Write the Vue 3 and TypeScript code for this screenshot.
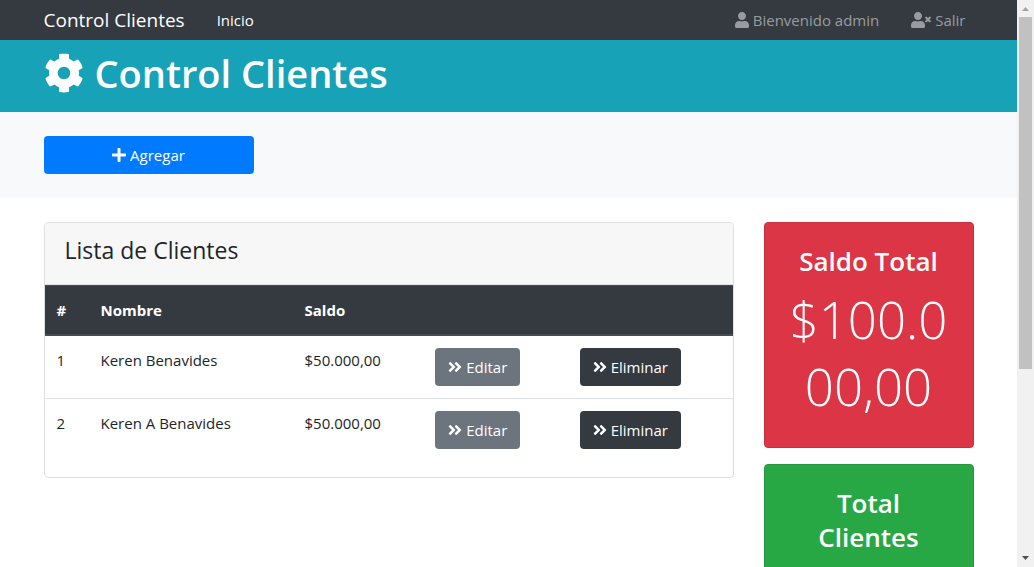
<script setup lang="ts">
interface Cliente {
  id: number
  nombre: string
  saldo: number
}

const clientes: Cliente[] = [
  { id: 1, nombre: 'Keren Benavides', saldo: 50000 },
  { id: 2, nombre: 'Keren A Benavides', saldo: 50000 },
]

const saldoTotal = clientes.reduce((total, c) => total + c.saldo, 0)

function moneda(valor: number): string {
  const [enteros, decimales] = valor.toFixed(2).split('.')
  return '$' + enteros.replace(/\B(?=(\d{3})+$)/g, '.') + ',' + decimales
}

const dobleFlecha =
  'M224.3 273l-136 136c-9.4 9.4-24.6 9.4-33.9 0l-22.6-22.6c-9.4-9.4-9.4-24.6 0-33.9l96.4-96.4-96.4-96.4c-9.4-9.4-9.4-24.6 0-33.9L54.3 103c9.4-9.4 24.6-9.4 33.9 0l136 136c9.5 9.4 9.5 24.6.1 34zm192-34l-136-136c-9.4-9.4-24.6-9.4-33.9 0l-22.6 22.6c-9.4 9.4-9.4 24.6 0 33.9l96.4 96.4-96.4 96.4c-9.4 9.4-9.4 24.6 0 33.9l22.6 22.6c9.4 9.4 24.6 9.4 33.9 0l136-136c9.4-9.2 9.4-24.4 0-33.8z'
const persona =
  'M224 256c70.7 0 128-57.3 128-128S294.7 0 224 0 96 57.3 96 128s57.3 128 128 128zm89.6 32h-16.7c-22.2 10.2-46.9 16-72.9 16s-50.6-5.8-72.9-16h-16.7C60.2 288 0 348.2 0 422.4V464c0 26.5 21.5 48 48 48h352c26.5 0 48-21.5 48-48v-41.6c0-74.2-60.2-134.4-134.4-134.4z'
</script>

<template>
  <div class="ventana">
    <div class="pagina">
      <nav class="barra">
        <div class="contenedor barra-fila">
          <a class="marca" href="#">Control Clientes</a>
          <a class="enlace activo" href="#">Inicio</a>
          <div class="sesion">
            <a class="enlace" href="#">
              <svg class="icono" viewBox="0 0 448 512" aria-hidden="true"><path :d="persona" /></svg>
              <span>Bienvenido admin</span>
            </a>
            <a class="enlace" href="#">
              <svg class="icono ancho" viewBox="0 0 640 512" aria-hidden="true">
                <path :d="persona" />
                <path d="M589.6 240l45.6-45.6c6.3-6.3 6.3-16.5 0-22.8l-22.8-22.8c-6.3-6.3-16.5-6.3-22.8 0L544 194.4l-45.6-45.6c-6.3-6.3-16.5-6.3-22.8 0l-22.8 22.8c-6.3 6.3-6.3 16.5 0 22.8l45.6 45.6-45.6 45.6c-6.3 6.3-6.3 16.5 0 22.8l22.8 22.8c6.3 6.3 16.5 6.3 22.8 0l45.6-45.6 45.6 45.6c6.3 6.3 16.5 6.3 22.8 0l22.8-22.8c6.3-6.3 6.3-16.5 0-22.8z" />
              </svg>
              <span>Salir</span>
            </a>
          </div>
        </div>
      </nav>

      <header class="cabecera">
        <div class="contenedor">
          <h1 class="titulo">
            <svg class="engranaje" viewBox="0 0 512 512" aria-hidden="true">
              <path d="M487.4 315.7l-42.6-24.6c4.3-23.2 4.3-47 0-70.2l42.6-24.6c4.9-2.8 7.1-8.6 5.5-14-11.1-35.6-30-67.8-54.7-94.6-3.8-4.1-10-5.1-14.8-2.3L380.8 110c-17.9-15.4-38.5-27.3-60.8-35.1V25.8c0-5.6-3.9-10.5-9.4-11.7-36.7-8.2-74.3-7.8-109.2 0-5.5 1.2-9.4 6.1-9.4 11.7V75c-22.2 7.9-42.8 19.8-60.8 35.1L88.7 85.5c-4.9-2.8-11-1.9-14.8 2.3-24.7 26.7-43.6 58.9-54.7 94.6-1.7 5.4.6 11.2 5.5 14L67.3 221c-4.3 23.2-4.3 47 0 70.2l-42.6 24.6c-4.9 2.8-7.1 8.6-5.5 14 11.1 35.6 30 67.8 54.7 94.6 3.8 4.1 10 5.1 14.8 2.3l42.6-24.6c17.9 15.4 38.5 27.3 60.8 35.1v49.2c0 5.6 3.9 10.5 9.4 11.7 36.7 8.2 74.3 7.8 109.2 0 5.5-1.2 9.4-6.1 9.4-11.7v-49.2c22.2-7.9 42.8-19.8 60.8-35.1l42.6 24.6c4.9 2.8 11 1.9 14.8-2.3 24.7-26.7 43.6-58.9 54.7-94.6 1.5-5.5-.7-11.3-5.6-14.1zM256 336c-44.1 0-80-35.9-80-80s35.9-80 80-80 80 35.9 80 80-35.9 80-80 80z" />
            </svg>
            <span>Control Clientes</span>
          </h1>
        </div>
      </header>

      <section class="acciones">
        <div class="contenedor rejilla-acciones">
          <button class="boton primario" type="button">
            <svg class="icono" viewBox="0 0 448 512" aria-hidden="true">
              <path d="M416 208H272V64c0-17.67-14.33-32-32-32h-32c-17.67 0-32 14.33-32 32v144H32c-17.67 0-32 14.33-32 32v32c0 17.67 14.33 32 32 32h144v144c0 17.67 14.33 32 32 32h32c17.67 0 32-14.33 32-32V304h144c17.67 0 32-14.33 32-32v-32c0-17.67-14.33-32-32-32z" />
            </svg>
            <span>Agregar</span>
          </button>
        </div>
      </section>

      <main class="contenedor rejilla">
        <section class="tarjeta">
          <div class="tarjeta-cabecera">
            <h4>Lista de Clientes</h4>
          </div>
          <table class="tabla">
            <colgroup>
              <col class="col-id" />
              <col class="col-nombre" />
              <col class="col-saldo" />
              <col class="col-editar" />
              <col />
            </colgroup>
            <thead>
              <tr>
                <th scope="col">#</th>
                <th scope="col">Nombre</th>
                <th scope="col">Saldo</th>
                <th></th>
                <th></th>
              </tr>
            </thead>
            <tbody>
              <tr v-for="c in clientes" :key="c.id">
                <td>{{ c.id }}</td>
                <td>{{ c.nombre }}</td>
                <td>{{ moneda(c.saldo) }}</td>
                <td>
                  <a class="boton secundario" href="#">
                    <svg class="icono" viewBox="0 0 448 512" aria-hidden="true"><path :d="dobleFlecha" /></svg>
                    <span>Editar</span>
                  </a>
                </td>
                <td>
                  <a class="boton oscuro" href="#">
                    <svg class="icono" viewBox="0 0 448 512" aria-hidden="true"><path :d="dobleFlecha" /></svg>
                    <span>Eliminar</span>
                  </a>
                </td>
              </tr>
            </tbody>
          </table>
        </section>

        <aside class="resumen">
          <div class="panel rojo">
            <h3>Saldo Total</h3>
            <p class="cifra">{{ moneda(saldoTotal) }}</p>
          </div>
          <div class="panel verde">
            <h3>Total Clientes</h3>
          </div>
        </aside>
      </main>
    </div>

    <div class="desplazamiento">
      <button class="flecha tenue" type="button" aria-label="Subir">
        <svg viewBox="0 0 17 17" aria-hidden="true"><path d="M5 11L8.5 7L12 11z" /></svg>
      </button>
      <div class="carril"><div class="pulgar"></div></div>
      <button class="flecha" type="button" aria-label="Bajar">
        <svg viewBox="0 0 17 17" aria-hidden="true"><path d="M5 6L8.5 10L12 6z" /></svg>
      </button>
    </div>
  </div>
</template>

<style>
body {
  margin: 0;
  background: #fff;
}
</style>

<style scoped>
* {
  box-sizing: border-box;
}
.ventana {
  display: grid;
  grid-template-columns: minmax(0, 1fr) 17px;
  height: 100vh;
  overflow: hidden;
  font-family: "Segoe UI", "Open Sans", "Noto Sans", sans-serif;
  font-size: 15px;
  line-height: 24px;
  color: #212529;
}
.pagina {
  min-width: 0;
  overflow: hidden;
}
.contenedor {
  width: 100%;
  max-width: 960px;
  margin: 0 auto;
  padding: 0 15px;
}
a {
  text-decoration: none;
}
h1,
h3,
h4,
p {
  margin: 0 0 8px;
}
.icono {
  width: 14px;
  height: 16px;
  flex: none;
  fill: currentColor;
}
.icono.ancho {
  width: 20px;
}

.barra {
  background: #343a40;
}
.barra-fila {
  display: flex;
  align-items: center;
  height: 40px;
}
.marca {
  margin-right: 24px;
  color: #fff;
  font-size: 19px;
}
.enlace {
  display: flex;
  align-items: center;
  gap: 4px;
  padding: 0 8px;
  color: #999c9f;
}
.enlace.activo {
  color: #fff;
}
.sesion {
  display: flex;
  gap: 16px;
  margin-left: auto;
}

.cabecera {
  padding: 8px 0;
  background: #17a2b8;
  color: #fff;
}
.cabecera .contenedor {
  display: flow-root;
}
.titulo {
  display: flex;
  gap: 11px;
  margin-bottom: 6px;
  font-size: 38px;
  line-height: 50px;
  font-weight: 600;
}
.engranaje {
  width: 40px;
  height: 40px;
  margin-top: 5px;
  fill: currentColor;
}

.acciones {
  margin-bottom: 24px;
  padding: 24px 0;
  background: #f8f9fa;
}
.rejilla-acciones {
  display: grid;
  grid-template-columns: repeat(4, minmax(0, 1fr));
  gap: 30px;
}
.boton {
  display: inline-flex;
  align-items: center;
  justify-content: center;
  gap: 4px;
  height: 38px;
  padding: 0 13px;
  border: 0;
  border-radius: 4px;
  color: #fff;
  font: inherit;
  vertical-align: top;
}
.primario {
  background: #007bff;
}
.secundario {
  background: #6c757d;
}
.oscuro {
  background: #343a40;
}

.rejilla {
  display: grid;
  grid-template-columns: minmax(0, 1fr) 210px;
  align-items: start;
  gap: 30px;
}
.tarjeta {
  padding-bottom: 16px;
  border: 1px solid #dfdfdf;
  border-radius: 4px;
}
.tarjeta-cabecera {
  padding: 12px 20px;
  border-bottom: 1px solid #dfdfdf;
  background: #f7f7f7;
  border-radius: 3px 3px 0 0;
}
.tarjeta-cabecera h4 {
  margin-bottom: 6px;
  font-size: 23px;
  line-height: 31px;
  font-weight: 500;
}
.tabla {
  width: 100%;
  border-spacing: 0;
  table-layout: fixed;
}
.col-id {
  width: 44px;
}
.col-nombre {
  width: 204px;
}
.col-saldo {
  width: 19%;
}
.col-editar {
  width: 21%;
}
th,
td {
  padding: 12px;
  text-align: left;
  vertical-align: top;
}
th {
  border-top: 1px solid #454d55;
  border-bottom: 2px solid #454d55;
  background: #343a40;
  color: #fff;
  font-weight: 700;
}
tbody tr + tr td {
  border-top: 1px solid #dee2e6;
}

.resumen {
  display: grid;
  gap: 16px;
}
.panel {
  min-height: 226px;
  padding: 21px 20px 19px;
  border: 1px solid #c5303f;
  border-radius: 4px;
  color: #fff;
  text-align: center;
}
.rojo {
  background: #dc3545;
}
.verde {
  border-color: #24963e;
  background: #28a745;
}
.panel h3 {
  font-size: 26px;
  line-height: 34px;
  font-weight: 600;
}
.cifra {
  font-size: 51px;
  line-height: 67px;
  font-weight: 300;
  word-break: break-all;
}

.desplazamiento {
  display: flex;
  flex-direction: column;
  background: #f1f1f1;
}
.flecha {
  height: 17px;
  padding: 0;
  border: 0;
  background: none;
  color: #505050;
}
.flecha.tenue {
  color: #a3a3a3;
}
.flecha svg {
  display: block;
  width: 17px;
  height: 17px;
  fill: currentColor;
}
.carril {
  flex: 1;
  padding: 0 2px;
}
.pulgar {
  height: 66%;
  background: #c1c1c1;
}
</style>
